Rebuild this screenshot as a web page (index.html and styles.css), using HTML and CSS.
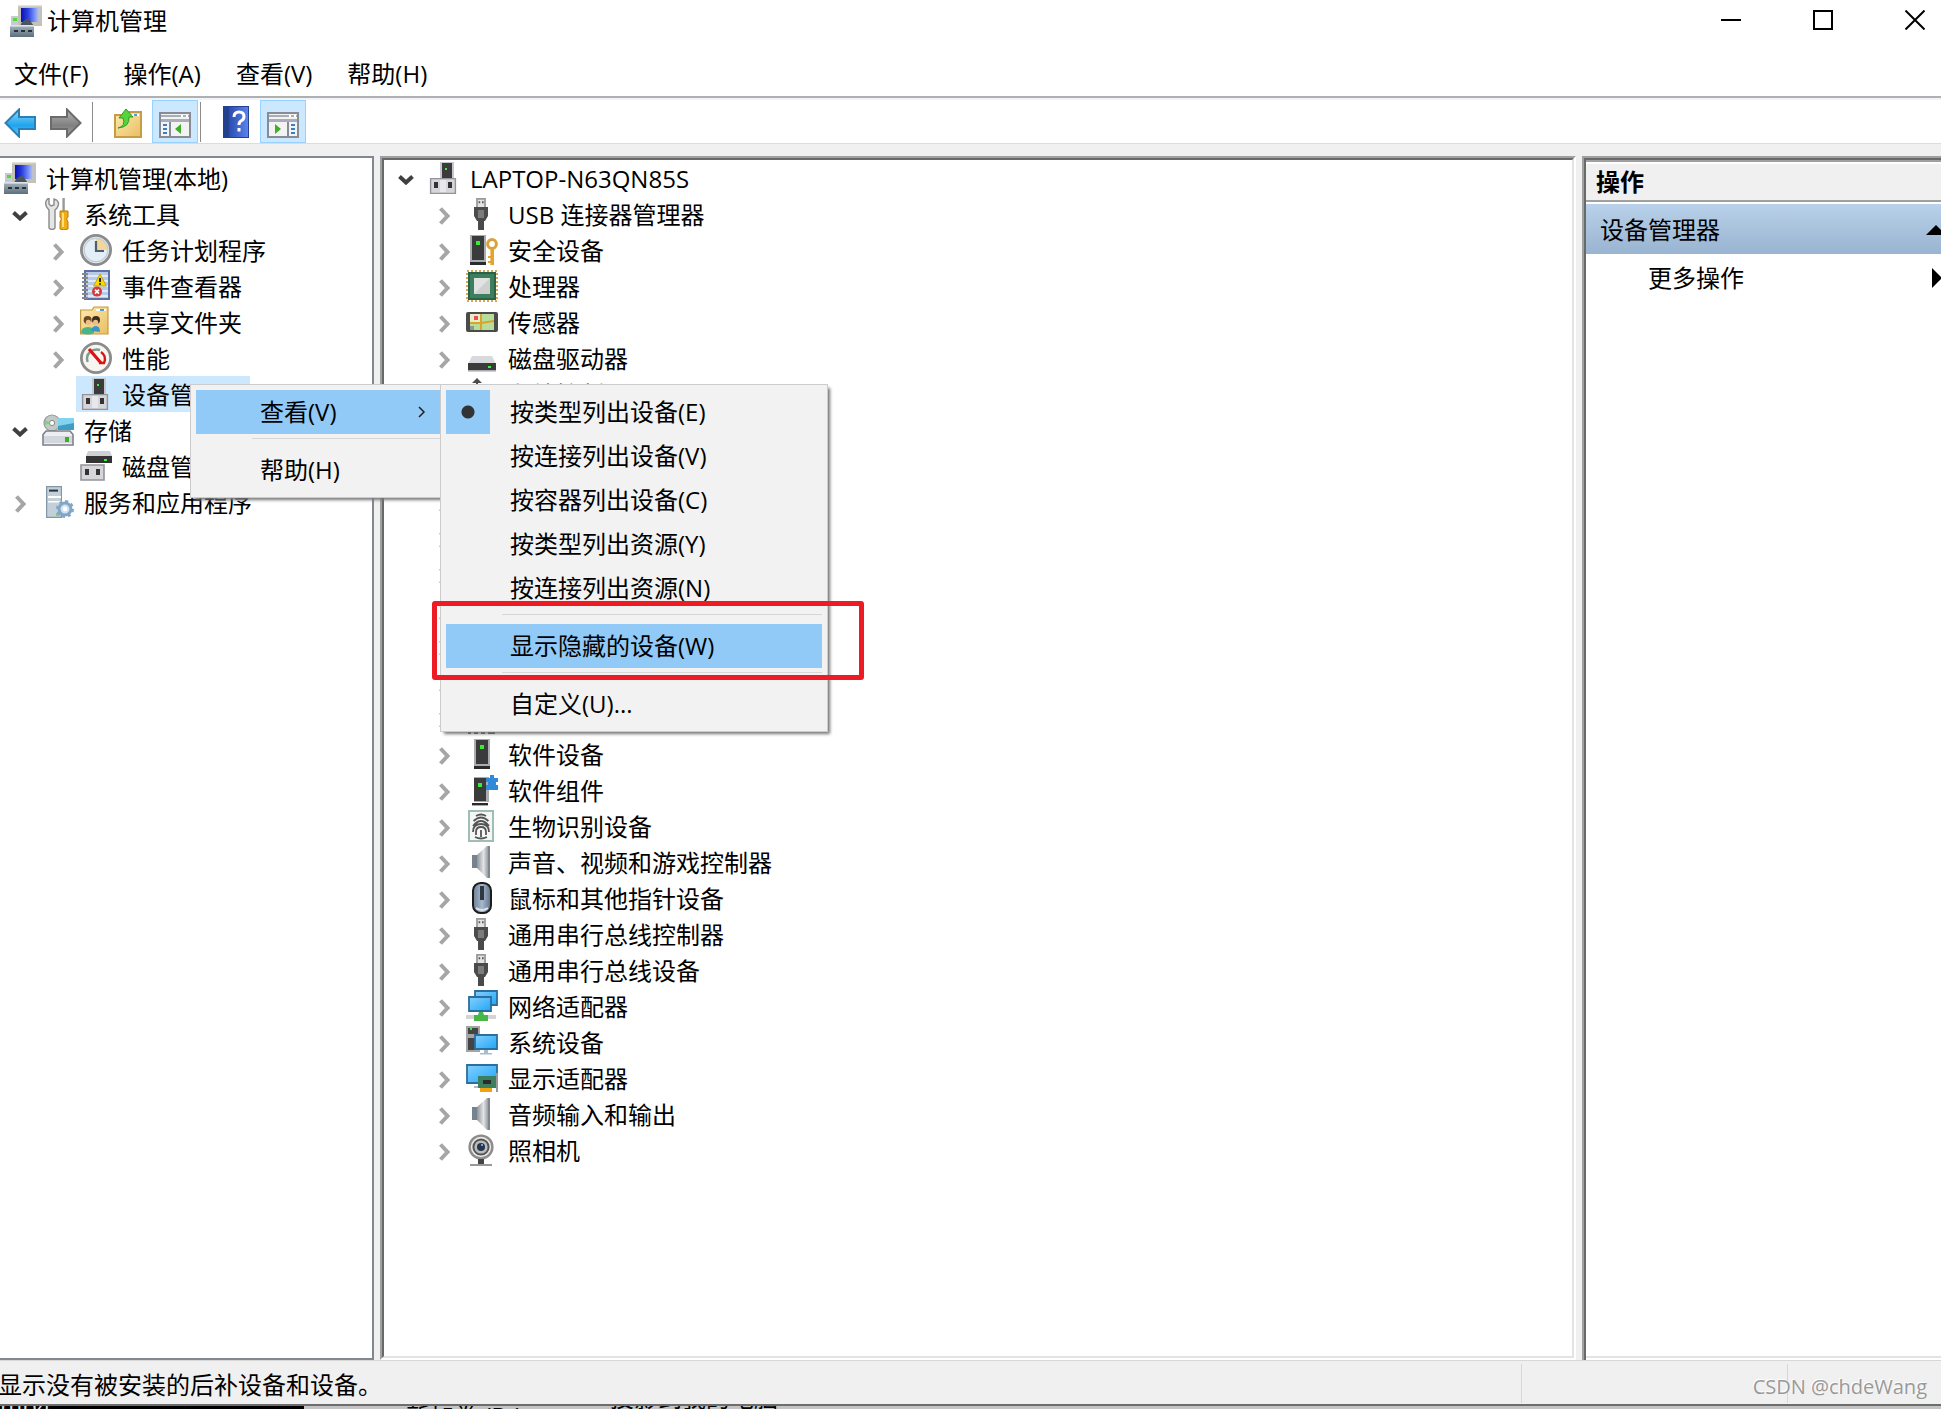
FILE: index.html
```html
<!DOCTYPE html>
<html lang="zh-CN">
<head>
<meta charset="utf-8">
<title>计算机管理</title>
<link rel="stylesheet" href="styles.css">
</head>
<body>
<svg class="sprite" aria-hidden="true">
  <defs>
    <linearGradient id="g-screen" x1="0" y1="0" x2="1" y2="0"><stop offset="0" stop-color="#0a10b4"/><stop offset=".4" stop-color="#2b3fe0"/><stop offset="1" stop-color="#a9c0ff"/></linearGradient>
    <linearGradient id="g-sky" x1="0" y1="0" x2="1" y2="1"><stop offset="0" stop-color="#85d0fc"/><stop offset="1" stop-color="#1fa6f9"/></linearGradient>
    <linearGradient id="g-folder" x1="0" y1="0" x2="1" y2="1"><stop offset="0" stop-color="#fdeab0"/><stop offset="1" stop-color="#e9bf62"/></linearGradient>
    <linearGradient id="g-metal" x1="0" y1="0" x2="1" y2="0"><stop offset="0" stop-color="#8f9499"/><stop offset=".5" stop-color="#e2e4e6"/><stop offset="1" stop-color="#7a8087"/></linearGradient>
    <linearGradient id="g-box" x1="0" y1="0" x2="0" y2="1"><stop offset="0" stop-color="#a8b6c0"/><stop offset="1" stop-color="#5c6f7c"/></linearGradient>
    <linearGradient id="g-help" x1="0" y1="0" x2="1" y2="0"><stop offset="0" stop-color="#2c4dae"/><stop offset="1" stop-color="#5b82ee"/></linearGradient>
    <linearGradient id="g-back" x1="0" y1="0" x2="0" y2="1"><stop offset="0" stop-color="#8fd8fb"/><stop offset=".6" stop-color="#1fa4ee"/><stop offset="1" stop-color="#6ccaf8"/></linearGradient>
    <linearGradient id="g-fwd" x1="0" y1="0" x2="0" y2="1"><stop offset="0" stop-color="#b5b5b5"/><stop offset=".6" stop-color="#808080"/><stop offset="1" stop-color="#a2a2a2"/></linearGradient>
    <linearGradient id="g-mouse" x1="0" y1="0" x2="1" y2="0"><stop offset="0" stop-color="#6b7f98"/><stop offset=".5" stop-color="#a9b8ca"/><stop offset="1" stop-color="#5c7089"/></linearGradient>
  </defs>
  <symbol id="chev-down" viewBox="0 0 16 10"><path d="M1.5 1.5 8 7.5l6.500-6" fill="none" stroke="#404040" stroke-width="4"/></symbol>
  <symbol id="chev-right" viewBox="0 0 11 18"><path d="M1.500 1.500 8.500 9l-7 7.500" fill="none" stroke="#a6a6a6" stroke-width="4"/></symbol>

  <symbol id="i-mgmt" viewBox="0 0 16 16">
    <path d="M.5 5.500h4v5h-4z" fill="#c4ccd0"/><path d="M1.500 6.500h2v1.500h-2z" fill="#4fdc3a"/>
    <path d="M4 0h12v10.500H4z" fill="#c4c2b6"/><path d="M4 0h12v.7H4z" fill="#e4e3dc"/><path d="M5.500 1.500h8.700v7H5.500z" fill="url(#g-screen)"/>
    <path d="M6 8.500l3-2 3 4H5z" fill="#4a5560"/>
    <path d="M0 10h12v6H0z" fill="url(#g-box)"/><path d="M2 12.500h2v1H2zM5.500 12.500h2v1h-2zM9 12.500h2v1H9z" fill="#26333c"/><path d="M0 10h12v.8H0z" fill="#dfe5e8"/>
  </symbol>
  <symbol id="i-tools" viewBox="0 0 16 16">
    <path d="M3.500 0v3l1 1 1.500-.5V.5C8 .8 9 2.800 7.500 5L6.500 6v9q-1.500 1.500-3 0V6L2.300 4.500C1.400 2.500 2 .8 3.500 0z" fill="#e5e5e5" stroke="#8a8a8a" stroke-width=".7"/>
    <path d="M10.200 0h1.200v7h-1.200z" fill="#999"/><path d="M9 6.500h4v3l-.7 1 .7 1.500v3.500q-2 1-4 0V12l.7-1.500-.7-1z" fill="#f1ad15" stroke="#b97b06" stroke-width=".5"/><path d="M10 7.500h1v7h-1z" fill="#ffe07d"/>
  </symbol>
  <symbol id="i-clock" viewBox="0 0 16 16">
    <circle cx="8" cy="8" r="7.300" fill="#e4eef6" stroke="#8b8b8b" stroke-width="1.400"/><path d="M8 8V2a6 6 0 0 1 6 6z" fill="#f1d79d"/><circle cx="8" cy="8" r="5.900" fill="none" stroke="#c5ced4" stroke-width=".7"/><path d="M8 3.500V8.500H12" fill="none" stroke="#4d5f70" stroke-width="1.100"/>
  </symbol>
  <symbol id="i-event" viewBox="0 0 16 16">
    <path d="M2.500.5h12v14h-12z" fill="#b8cbe6" stroke="#5d70a6"/><path d="M4 3h10M4 5.500h10M4 8h10M4 10.500h10M4 13h10" stroke="#eef4fc" stroke-width=".8"/>
    <path d="M1 2h3M1 4h3M1 6h3M1 8h3M1 10h3M1 12h3M1 14h3" stroke="#888" stroke-width=".9"/>
    <path d="M10 2l3.200 6H6.800z" fill="#f7d900" stroke="#b59a00" stroke-width=".4"/><path d="M9.500 4h1v2h-1zM9.500 6.600h1v.8h-1z" fill="#222"/>
    <circle cx="8.500" cy="10.800" r="2.500" fill="#d63a3a"/><path d="M7.500 9.800l2 2M9.500 9.800l-2 2" stroke="#fff" stroke-width=".8"/>
  </symbol>
  <symbol id="i-share" viewBox="0 0 16 16">
    <path d="M.3 2H6l1-1.500h7V14H.3z" fill="url(#g-folder)" stroke="#c69a45" stroke-width=".6"/><path d="M8 1.500h5v1H8z" fill="#fff"/><path d="M10 1.500h2v1h-2z" fill="#4a9be0"/>
    <circle cx="3.800" cy="7" r="2" fill="#6b4a22"/><circle cx="4.200" cy="8.200" r="1.300" fill="#edbd8a"/><circle cx="8" cy="7" r="2" fill="#3b2c1c"/><circle cx="7.800" cy="8.200" r="1.300" fill="#edbd8a"/>
    <path d="M.5 13.500q0-3 3.500-3t3 3q-3 1.500-6.500 0z" fill="#49b48a"/><path d="M5.500 12.500q.5-2.500 2.500-2.500t2 3z" fill="#3c93c9"/>
  </symbol>
  <symbol id="i-perf" viewBox="0 0 16 16">
    <circle cx="8" cy="8" r="7.300" fill="#f6f5f0" stroke="#8b8b8b" stroke-width="1.400"/><path d="M3.800 10C2.500 6 6 3 10 4" fill="none" stroke="#7f9a90" stroke-width="1.200"/><path d="M10.500 5q3 2 1.500 5.500H9.500" fill="none" stroke="#d01818" stroke-width="1.200"/><path d="M4.500 3.500l6 7" stroke="#e01010" stroke-width="1.600"/>
  </symbol>
  <symbol id="i-devmgr" viewBox="0 0 16 16">
    <path d="M6 0h7v8H6z" fill="#c4c8cd"/><path d="M7 .5h5v7.500H7z" fill="#3b3b3b"/><path d="M8.500 3h1v1h-1z" fill="#3cf03c"/>
    <path d="M1.300 8.300h12.400v7.400H1.300z" fill="#d6d6da" stroke="#93939a" stroke-width=".7"/><path d="M3 10h2v3H3zM10 10h2v3h-2z" fill="#333"/><path d="M6 9h3v6H6z" fill="#e8e8ec"/>
  </symbol>
  <symbol id="i-storage" viewBox="0 0 16 16">
    <circle cx="5" cy="4.500" r="4" fill="#c2c9c6" stroke="#999" stroke-width=".6"/><circle cx="5" cy="4.500" r="1.300" fill="#fff" stroke="#888" stroke-width=".5"/><path d="M1.500 3l3 1.500-3 1z" fill="#76d67c"/>
    <path d="M8 2h8v6H8z" fill="#3d9dc4"/><path d="M8 2h8v2.500L8 6z" fill="#83d3ee"/>
    <path d="M2 8.500h12l1.500 1.800v5.200H.5v-5.200z" fill="#eceef2" stroke="#7e7f88" stroke-width=".8"/><path d="M1 11h14v3.500H1z" fill="#d4d6de"/><path d="M11.500 11.500h2v2.500h-2z" fill="#3fae22"/>
  </symbol>
  <symbol id="i-diskmgmt" viewBox="0 0 16 16">
    <path d="M4 .500h11l1 2.500H3z" fill="#cdd0d4"/><path d="M3 3h13v3.500H3z" fill="#333"/><path d="M12 4.500h1.500v1H12z" fill="#3cf03c"/>
    <path d="M.5 7.500h11.500V15H.5z" fill="#d6d6da" stroke="#93939a" stroke-width=".8"/><path d="M2.500 9.500h2v3h-2zM8 9.500h2v3H8z" fill="#333"/>
  </symbol>
  <symbol id="i-services" viewBox="0 0 16 16">
    <path d="M2.300.3h7.400v15.400H2.300z" fill="#c3d0da" stroke="#8396a5" stroke-width=".6"/><path d="M3.500 1.800H8v1H3.500z" fill="#26333c"/><path d="M3 5h6.500v1H3zM3 7.500h6.500v.8H3z" fill="#fff"/><path d="M7 13.500h2v1.500H7z" fill="#70e04c"/>
    <circle cx="11.500" cy="11.500" r="3" fill="#cfe2f2" stroke="#82a6c6" stroke-width="1.500"/><circle cx="11.500" cy="11.500" r="3.900" fill="none" stroke="#82a6c6" stroke-width="1.200" stroke-dasharray="1.500 1.560"/><circle cx="11.500" cy="11.500" r="1.200" fill="#fff"/>
  </symbol>
  <symbol id="i-usb" viewBox="0 0 16 16">
    <path d="M5.500.4h4V5h-4z" fill="#e3e3e3" stroke="#9a9a9a" stroke-width=".9"/><path d="M6.300 1.600h.8v1h-.8zM8 1.600h.8v1H8z" fill="#555"/><path d="M4 4.500h7V9l-1.500 2.500h-4L4 9z" fill="#4b4b4b"/><path d="M6 6h3v4H6z" fill="#7c7c7c"/><path d="M6 11h3v5H6z" fill="#4a4a4a"/>
  </symbol>
  <symbol id="i-controller" viewBox="0 0 16 16">
    <path d="M5.500 0l2.500 2.500h-2V7H5V2.500H3z" fill="#4b4b4b"/><path d="M1 8h14v5H1z" fill="#3b3b3b"/>
  </symbol>
  <symbol id="i-hid" viewBox="0 0 16 16">
    <path d="M1 6h13v5H1z" fill="#b9bec4"/><path d="M1 15h1.500v1H1zM4 15h2v1H4zM7.500 15h2v1h-2zM11 14.500h3.500V16H11z" fill="#3b3b3b"/>
  </symbol>
  <symbol id="i-tower" viewBox="0 0 16 16">
    <path d="M4 .5h8v13.500H4z" fill="#a9adb2"/><path d="M5 1h6v12H5z" fill="#3b3b3b"/><path d="M7 3.500h2v2H7z" fill="#33ee33"/><path d="M4 14h8v1.500H4z" fill="#2b2b2b"/>
  </symbol>
  <symbol id="i-security" viewBox="0 0 16 16">
    <path d="M2 .5h8v13.500H2z" fill="#a9adb2"/><path d="M3 1h6v12H3z" fill="#3b3b3b"/><path d="M5 3.500h2v2H5z" fill="#33ee33"/><path d="M2 14h8v1.500H2z" fill="#2b2b2b"/>
    <circle cx="13" cy="5" r="2.200" fill="none" stroke="#d9a23a" stroke-width="1.500"/><path d="M12.200 7.500h1.800v8h-1.800zM11 11h1.500v1H11zM11 13.500h1.500v1H11z" fill="#e5a52c"/>
  </symbol>
  <symbol id="i-cpu" viewBox="0 0 16 16">
    <rect x=".5" y=".5" width="15" height="15" fill="none" stroke="#d9a657" stroke-dasharray="1 1"/><path d="M1 1h14v14H1z" fill="#2c6148"/><path d="M2 2h12v12H2z" fill="#3b7f5f"/><path d="M4 4h8v8H4z" fill="#e2e2e2"/><path d="M12 4v8H4z" fill="#cfcfcf"/>
  </symbol>
  <symbol id="i-sensor" viewBox="0 0 16 16">
    <rect y="3" width="16" height="10" rx="1" fill="#4b4b4b"/><path d="M2 4h12v8H2z" fill="#b9dc9a"/><path d="M2 4h5v4H2z" fill="#e7edc4"/><path d="M7.500 4v8M2 8.500h5.500L14 7.500" fill="none" stroke="#d6a52c"/><path d="M4 5h2v2H4z" fill="#ee4a5a"/><path d="M2 10h2v2H2z" fill="#8a9a8a"/>
  </symbol>
  <symbol id="i-disk" viewBox="0 0 16 16">
    <path d="M3 7h10l1.700 3.500H1.300z" fill="#d7d9dc"/><path d="M1 10.500h14v3.500H1z" fill="#3b3b3b"/><path d="M1 14h14v.8H1z" fill="#a9adb2"/><path d="M11 12h1.500v1H11z" fill="#3cf03c"/>
  </symbol>
  <symbol id="i-component" viewBox="0 0 16 16">
    <path d="M4 1.500h7.500v12.500H4z" fill="#a9adb2"/><path d="M4 2h6v11.500H4z" fill="#3b3b3b"/><path d="M6 4.500h2v2H6z" fill="#33ee33"/><path d="M3 14.500h8v1.200H3z" fill="#2b2b2b"/>
    <path d="M10 2h2V.5h2V2h2v2h-1v1.500h1V8h-6V5.500h1V4h-1z" fill="#2f8bd8"/>
  </symbol>
  <symbol id="i-finger" viewBox="0 0 16 16">
    <path d="M1.500.5h12v15h-12z" fill="#f4f7f6" stroke="#9dbfb5"/><path d="M5 3q2.500-1.500 5 0M3.800 5.500q3.700-3.500 7.400 0M3.500 8q4-5 8 0M3.500 11Q3.500 7 7.500 7t4 4M5 12.500V11q0-2.500 2.500-2.500T10 11v1.500M7.500 10v3.500M4.500 13.500q3 1.500 6 0" fill="none" stroke="#555" stroke-width=".9"/>
  </symbol>
  <symbol id="i-speaker" viewBox="0 0 16 16">
    <path d="M3 4.500h2.500v6.500H3z" fill="#76828e"/><path d="M5.500 4.500L10.500 0H12v16h-1.500L5.500 11z" fill="url(#g-metal)"/><path d="M11 0h1v16h-1z" fill="#7f868d"/>
  </symbol>
  <symbol id="i-mouse" viewBox="0 0 16 16">
    <rect x="3.500" y=".5" width="9" height="15" rx="3.800" fill="url(#g-mouse)" stroke="#1c1c1c"/><rect x="7" y="2" width="2" height="7" fill="#2f3740"/><path d="M5 13q3 2 6 0" stroke="#dbe3ec" fill="none"/>
  </symbol>
  <symbol id="i-net" viewBox="0 0 16 16">
    <path d="M4.500.5h11v7h-11z" fill="url(#g-sky)" stroke="#2a6f9e" stroke-width=".9"/><path d="M1.500 3.500h11v7h-11z" fill="url(#g-sky)" stroke="#2a6f9e" stroke-width=".9"/>
    <path d="M0 12.500h15v2H0z" fill="#d4d4d4"/><path d="M4 12.500h2l.5-1.500h2l.5 1.500h2v3H4z" fill="#45b849"/>
  </symbol>
  <symbol id="i-system" viewBox="0 0 16 16">
    <path d="M0 0h7v13H0z" fill="#a5a5a5"/><path d="M1 1h5v3H1zM1 6h5v6H1z" fill="#444"/><path d="M2 1h1v1H2z" fill="#3cf03c"/><path d="M4.500 4.500h11v7h-11z" fill="url(#g-sky)" stroke="#2a6f9e" stroke-width=".9"/><path d="M9 12h2v1.500h2v.8H7v-.8h2z" fill="#a9bccb"/>
  </symbol>
  <symbol id="i-display" viewBox="0 0 16 16">
    <path d="M.5 1.500h15v9H.5z" fill="url(#g-sky)" stroke="#2a6f9e" stroke-width=".9"/><path d="M4 12h3v1H4z" fill="#a9bccb"/><path d="M6 7h9v6H6z" fill="#3b7f5f"/><path d="M8.500 9h4v2h-4z" fill="#2b2b2b"/><path d="M15 5.500h1V15h-1z" fill="#999"/><path d="M7 13h6v2H7z" fill="#f1a30f"/>
  </symbol>
  <symbol id="i-camera" viewBox="0 0 16 16">
    <circle cx="7.500" cy="6.500" r="5.700" fill="#e8e8e8" stroke="#8c8c8c" stroke-width="1.200"/><circle cx="7.500" cy="6.500" r="3.800" fill="#bbb" stroke="#555" stroke-width="1"/><circle cx="7.500" cy="6.500" r="2" fill="#24364d"/><path d="M7.500 5h1v1h-1z" fill="#6aa4e0"/><path d="M6 12.500h3V15H6z" fill="#444"/><path d="M2 15h11v1H2z" fill="#999"/>
  </symbol>

  <symbol id="t-back" viewBox="0 0 32 30"><path d="M1.500 15L15 1.500V9h16v12H15v7.500z" fill="url(#g-back)" stroke="#2b7fb5" stroke-width="2"/></symbol>
  <symbol id="t-fwd" viewBox="0 0 32 30"><path d="M30.500 15L17 1.500V9H1v12h16v7.500z" fill="url(#g-fwd)" stroke="#6b6b6b" stroke-width="2"/></symbol>
  <symbol id="t-up" viewBox="0 0 28 30"><path d="M1 7h8l3-3h15v25H1z" fill="url(#g-folder)" stroke="#c79c47" stroke-width="2"/><path d="M18 6h7v2h-7z" fill="#fff"/><path d="M20 6h3v2h-3z" fill="#4a9be0"/><path d="M4 20q8-2 5-10H5l7-9 7 8h-4q1 10-11 11z" fill="#55d43c" stroke="#2f9e22"/></symbol>
  <symbol id="t-left" viewBox="0 0 32 26"><path d="M1 1h30v24H1z" fill="#f3f3f3" stroke="#868c96" stroke-width="2"/><path d="M2 3h28v2H2zM2 7h28v3H2z" fill="#a9adb8"/><path d="M22 3h2v2h-2zM27 3h2v2h-2z" fill="#fff"/><path d="M10 10h2v15h-2z" fill="#868c96"/><path d="M4 12h4v2H4zM4 16h4v2H4zM4 20h4v2H4z" fill="#3a7fc4"/><path d="M22 12v10l-6-5z" fill="#3eae28"/></symbol>
  <symbol id="t-right" viewBox="0 0 32 26"><path d="M1 1h30v24H1z" fill="#f3f3f3" stroke="#868c96" stroke-width="2"/><path d="M2 3h28v2H2zM2 7h28v3H2z" fill="#a9adb8"/><path d="M22 3h2v2h-2zM27 3h2v2h-2z" fill="#fff"/><path d="M20 10h2v15h-2z" fill="#868c96"/><path d="M24 12h4v2h-4zM24 16h4v2h-4zM24 20h4v2h-4z" fill="#3a7fc4"/><path d="M8 12v10l6-5z" fill="#3eae28"/></symbol>
  <symbol id="t-help" viewBox="0 0 26 32"><path d="M0 0h26v32H0z" fill="#24418f"/><path d="M6 1h19v30H6z" fill="url(#g-help)"/><path d="M11 11q0-5 5-5t5 4.500q0 3-3 4.500-2 1-2 4" fill="none" stroke="#fff" stroke-width="3"/><path d="M14.500 22h3v3.500h-3z" fill="#fff"/></symbol>
</svg>

<div class="app">
  <header class="titlebar">
    <svg class="icon"><use href="#i-mgmt"/></svg>
    <h1 class="title">计算机管理</h1>
    <div class="caption">
      <button class="caption-btn" aria-label="最小化"><svg width="20" height="20"><path d="M0 10h20" stroke="#000" stroke-width="2"/></svg></button>
      <button class="caption-btn" aria-label="最大化"><svg width="20" height="20"><path d="M1 1h18v18H1z" fill="none" stroke="#000" stroke-width="2"/></svg></button>
      <button class="caption-btn" aria-label="关闭"><svg width="20" height="20"><path d="M.5.5l19 19M19.500.5l-19 19" stroke="#000" stroke-width="2"/></svg></button>
    </div>
  </header>

  <nav class="menubar">
    <button>文件(F)</button>
    <button>操作(A)</button>
    <button>查看(V)</button>
    <button>帮助(H)</button>
  </nav>

  <div class="toolbar">
    <button class="tool" aria-label="后退"><svg width="32" height="30"><use href="#t-back"/></svg></button>
    <button class="tool tool-forward" aria-label="前进"><svg width="32" height="30"><use href="#t-fwd"/></svg></button>
    <span class="tool-sep"></span>
    <button class="tool tool-wide" aria-label="向上"><svg width="28" height="30"><use href="#t-up"/></svg></button>
    <button class="tool active" aria-label="显示控制台树"><svg width="32" height="26"><use href="#t-left"/></svg></button>
    <span class="tool-sep"></span>
    <button class="tool tool-wide" aria-label="帮助"><svg width="26" height="32"><use href="#t-help"/></svg></button>
    <button class="tool active" aria-label="显示操作窗格"><svg width="32" height="26"><use href="#t-right"/></svg></button>
  </div>

  <main class="panes">
    <section class="pane pane-nav">
      <ul class="tree">
        <li class="row l0"><span class="label"><svg class="icon"><use href="#i-mgmt"/></svg>计算机管理(本地)</span></li>
        <li class="row l1"><svg class="chev down"><use href="#chev-down"/></svg><span class="label"><svg class="icon"><use href="#i-tools"/></svg>系统工具</span></li>
        <li class="row l2"><svg class="chev"><use href="#chev-right"/></svg><span class="label"><svg class="icon"><use href="#i-clock"/></svg>任务计划程序</span></li>
        <li class="row l2"><svg class="chev"><use href="#chev-right"/></svg><span class="label"><svg class="icon"><use href="#i-event"/></svg>事件查看器</span></li>
        <li class="row l2"><svg class="chev"><use href="#chev-right"/></svg><span class="label"><svg class="icon"><use href="#i-share"/></svg>共享文件夹</span></li>
        <li class="row l2"><svg class="chev"><use href="#chev-right"/></svg><span class="label"><svg class="icon"><use href="#i-perf"/></svg>性能</span></li>
        <li class="row l2"><svg class="chev"></svg><span class="label selected"><svg class="icon"><use href="#i-devmgr"/></svg>设备管理器</span></li>
        <li class="row l1"><svg class="chev down"><use href="#chev-down"/></svg><span class="label"><svg class="icon"><use href="#i-storage"/></svg>存储</span></li>
        <li class="row l2"><svg class="chev"></svg><span class="label"><svg class="icon"><use href="#i-diskmgmt"/></svg>磁盘管理</span></li>
        <li class="row l1"><svg class="chev"><use href="#chev-right"/></svg><span class="label"><svg class="icon"><use href="#i-services"/></svg>服务和应用程序</span></li>
      </ul>
    </section>

    <section class="pane pane-main">
      <ul class="tree">
        <li class="row l1"><svg class="chev down"><use href="#chev-down"/></svg><span class="label"><svg class="icon"><use href="#i-devmgr"/></svg>LAPTOP-N63QN85S</span></li>
        <li class="row l2"><svg class="chev"><use href="#chev-right"/></svg><span class="label"><svg class="icon"><use href="#i-usb"/></svg>USB 连接器管理器</span></li>
        <li class="row l2"><svg class="chev"><use href="#chev-right"/></svg><span class="label"><svg class="icon"><use href="#i-security"/></svg>安全设备</span></li>
        <li class="row l2"><svg class="chev"><use href="#chev-right"/></svg><span class="label"><svg class="icon"><use href="#i-cpu"/></svg>处理器</span></li>
        <li class="row l2"><svg class="chev"><use href="#chev-right"/></svg><span class="label"><svg class="icon"><use href="#i-sensor"/></svg>传感器</span></li>
        <li class="row l2"><svg class="chev"><use href="#chev-right"/></svg><span class="label"><svg class="icon"><use href="#i-disk"/></svg>磁盘驱动器</span></li>
        <li class="row l2"><svg class="chev"><use href="#chev-right"/></svg><span class="label"><svg class="icon"><use href="#i-controller"/></svg>存储控制器</span></li>
        <li class="row l2"><svg class="chev"><use href="#chev-right"/></svg></li>
        <li class="row l2"><svg class="chev"><use href="#chev-right"/></svg></li>
        <li class="row l2"><svg class="chev"><use href="#chev-right"/></svg></li>
        <li class="row l2"><svg class="chev"><use href="#chev-right"/></svg></li>
        <li class="row l2"><svg class="chev"><use href="#chev-right"/></svg></li>
        <li class="row l2"><svg class="chev"><use href="#chev-right"/></svg></li>
        <li class="row l2"><svg class="chev"><use href="#chev-right"/></svg></li>
        <li class="row l2"><svg class="chev"><use href="#chev-right"/></svg></li>
        <li class="row l2"><svg class="chev"><use href="#chev-right"/></svg><span class="label"><svg class="icon"><use href="#i-hid"/></svg></span></li>
        <li class="row l2"><svg class="chev"><use href="#chev-right"/></svg><span class="label"><svg class="icon"><use href="#i-tower"/></svg>软件设备</span></li>
        <li class="row l2"><svg class="chev"><use href="#chev-right"/></svg><span class="label"><svg class="icon"><use href="#i-component"/></svg>软件组件</span></li>
        <li class="row l2"><svg class="chev"><use href="#chev-right"/></svg><span class="label"><svg class="icon"><use href="#i-finger"/></svg>生物识别设备</span></li>
        <li class="row l2"><svg class="chev"><use href="#chev-right"/></svg><span class="label"><svg class="icon"><use href="#i-speaker"/></svg>声音、视频和游戏控制器</span></li>
        <li class="row l2"><svg class="chev"><use href="#chev-right"/></svg><span class="label"><svg class="icon"><use href="#i-mouse"/></svg>鼠标和其他指针设备</span></li>
        <li class="row l2"><svg class="chev"><use href="#chev-right"/></svg><span class="label"><svg class="icon"><use href="#i-usb"/></svg>通用串行总线控制器</span></li>
        <li class="row l2"><svg class="chev"><use href="#chev-right"/></svg><span class="label"><svg class="icon"><use href="#i-usb"/></svg>通用串行总线设备</span></li>
        <li class="row l2"><svg class="chev"><use href="#chev-right"/></svg><span class="label"><svg class="icon"><use href="#i-net"/></svg>网络适配器</span></li>
        <li class="row l2"><svg class="chev"><use href="#chev-right"/></svg><span class="label"><svg class="icon"><use href="#i-system"/></svg>系统设备</span></li>
        <li class="row l2"><svg class="chev"><use href="#chev-right"/></svg><span class="label"><svg class="icon"><use href="#i-display"/></svg>显示适配器</span></li>
        <li class="row l2"><svg class="chev"><use href="#chev-right"/></svg><span class="label"><svg class="icon"><use href="#i-speaker"/></svg>音频输入和输出</span></li>
        <li class="row l2"><svg class="chev"><use href="#chev-right"/></svg><span class="label"><svg class="icon"><use href="#i-camera"/></svg>照相机</span></li>
      </ul>
    </section>

    <aside class="pane pane-actions">
      <h2 class="actions-title">操作</h2>
      <button class="actions-group">设备管理器<svg width="20" height="10"><path d="M10 0l10 10H0z"/></svg></button>
      <button class="actions-item">更多操作<svg width="10" height="20"><path d="M0 0l10 10L0 20z"/></svg></button>
    </aside>
  </main>

  <footer class="statusbar">
    <span class="status-text">显示没有被安装的后补设备和设备。</span>
    <span class="status-cell"></span>
    <span class="status-cell status-end"></span>
  </footer>
  <div class="behind">
    <span class="behind-dark">mp4</span>
    <span class="behind-drive">新加卷 (D:)</span>
    <span class="behind-link">投影到我的电脑</span>
  </div>

  <div class="menu menu-context" role="menu">
    <button class="menu-item hot" role="menuitem">查看(V)<svg class="menu-arrow" width="8" height="12"><path d="M1 1l5 5-5 5" fill="none" stroke="#222" stroke-width="1.500"/></svg></button>
    <hr class="menu-sep">
    <button class="menu-item" role="menuitem">帮助(H)</button>
  </div>
  <div class="menu menu-view" role="menu">
    <button class="menu-item checked" role="menuitemradio" aria-checked="true">按类型列出设备(E)</button>
    <button class="menu-item" role="menuitem">按连接列出设备(V)</button>
    <button class="menu-item" role="menuitem">按容器列出设备(C)</button>
    <button class="menu-item" role="menuitem">按类型列出资源(Y)</button>
    <button class="menu-item" role="menuitem">按连接列出资源(N)</button>
    <hr class="menu-sep">
    <button class="menu-item hot" role="menuitem">显示隐藏的设备(W)</button>
    <hr class="menu-sep">
    <button class="menu-item" role="menuitem">自定义(U)...</button>
  </div>
  <div class="mark"></div>
  <div class="watermark">CSDN @chdeWang</div>
</div>
</body>
</html>
```
FILE: styles.css
```css
* { box-sizing: border-box; }

body {
  margin: 0;
  background: #fff;
  color: #000;
  font: 24px/36px "Open Sans", "Noto Sans CJK SC", sans-serif;
}

button {
  margin: 0;
  padding: 0;
  border: 0;
  background: none;
  color: inherit;
  font: inherit;
  text-align: left;
}

svg { display: block; flex: none; }
.sprite { position: absolute; width: 0; height: 0; }
.icon { width: 32px; height: 32px; }

.app {
  position: relative;
  display: flex;
  flex-direction: column;
  height: 100vh;
  overflow: hidden;
}

/* Title bar */
.titlebar {
  display: flex;
  align-items: center;
  flex: none;
  height: 42px;
  padding-left: 10px;
}
.title { margin: 0 0 0 5px; font-size: 24px; font-weight: 400; }
.caption { display: flex; align-self: flex-start; margin: 0 -20px 0 auto; }
.caption-btn {
  display: flex;
  align-items: center;
  justify-content: center;
  width: 92px;
  height: 40px;
}

/* Menu bar */
.menubar {
  display: flex;
  align-items: center;
  flex: none;
  gap: 35px;
  height: 56px;
  padding: 10px 14px 0;
  border-bottom: 2px solid #b0b0b0;
}

/* Toolbar */
.toolbar {
  display: flex;
  flex: none;
  height: 46px;
  border-top: 2px solid #f1f5fb;
  border-bottom: 1px solid #dcdcdc;
}
.tool {
  display: flex;
  align-items: flex-end;
  justify-content: center;
  width: 46px;
  padding-bottom: 5px;
}
.tool:first-child { width: 40px; }
.tool-forward { width: 52px; }
.tool-wide { width: 48px; }
.tool.active { border: 1px solid #99d1ff; background: #cce8ff; padding-bottom: 4px; }
.tool-sep { width: 1px; margin: 2px 11px 1px 0; background: #8c8c8c; }
.active + .tool-sep { margin-left: 2px; }

/* Panes */
.panes {
  display: flex;
  flex: 1;
  gap: 6px;
  min-height: 0;
  padding-top: 12px;
  background: #f0f0f0;
}
.pane { background: #fff; overflow: hidden; }
.pane-nav {
  flex: 0 0 374px;
  padding-top: 2px;
  border: solid #828790;
  border-width: 2px 2px 2px 0;
}
.pane-main {
  flex: 1;
  border: solid;
  border-width: 2px;
  border-color: #a0a0a0 #fff #fff #a0a0a0;
}
.pane-main .tree {
  height: 100%;
  padding-left: 2px;
  border: solid;
  border-width: 2px;
  border-color: #696969 #e3e3e3 #e3e3e3 #696969;
}
.pane-actions {
  flex: 0 0 359px;
  border: solid #a0a0a0;
  border-width: 2px 0 0 2px;
  box-shadow: inset 2px 2px #696969, inset 0 -2px #fff, inset 0 -4px #e3e3e3;
  padding: 2px 0 4px 2px;
}

/* Trees */
.tree { margin: 0; padding: 0; list-style: none; }
.row { display: flex; align-items: center; height: 36px; white-space: nowrap; }
.row.l2 { padding-left: 38px; }
.chev { width: 38px; height: 18px; margin-top: 3px; padding: 0 0 0 3px; }
.chev.down { height: 10px; padding: 0 0 0 2px; }
.label {
  display: flex;
  align-items: center;
  gap: 10px;
  height: 36px;
  padding: 2px 8px 0 4px;
}
.label .icon { margin-top: -2px; }
.label.selected { background: #cce8ff; }

/* Actions pane */
.actions-title {
  margin: 0;
  padding-left: 10px;
  border: solid #a0a0a0;
  border-width: 2px 0;
  background: #f0f0f0;
  box-shadow: inset 0 2px #fff;
  font-size: 24px;
  font-weight: 700;
  line-height: 40px;
  height: 42px;
}
.actions-group,
.actions-item {
  display: flex;
  align-items: center;
  justify-content: space-between;
  width: 100%;
}
.actions-group {
  height: 50px;
  margin-top: 2px;
  padding: 2px 0 0 14px;
  background: linear-gradient(#b9d1ea, #99b4d1);
}
.actions-group svg { margin-right: -5px; }
.actions-item { height: 48px; padding-left: 62px; }
.actions-item svg { margin-right: -1px; }

/* Status bar */
.statusbar {
  display: flex;
  flex: none;
  height: 44px;
  padding-bottom: 1px;
  border-top: 1px solid #d7d7d7;
  background: #f0f0f0;
}
.status-text { flex: 1; margin-left: -2px; line-height: 48px; height: 42px; }
.status-cell { width: 266px; margin-top: 3px; border-left: 1px solid #d7d7d7; }
.status-end { width: 154px; }

/* Sliver of the windows lying behind */
.behind {
  display: flex;
  flex: none;
  height: 5px;
  overflow: hidden;
  border-top: 2px solid #6d6d6d;
  background: #c4c4c4;
}
.behind-dark { width: 304px; height: 5px; background: #000; color: #ddd; line-height: 0; }
.behind-drive { width: 242px; padding-left: 102px; white-space: nowrap; line-height: 20px; }
.behind-link { flex: 1; padding-left: 64px; line-height: 0; margin-top: -8px; }

/* Popup menus */
.menu {
  position: absolute;
  top: 384px;
  padding: 5px;
  border: 1px solid #ccc;
  background: #f2f2f2;
  box-shadow: 3px 3px 3px -1px #777;
}
.menu-context { left: 190px; width: 256px; }
.menu-view { left: 440px; width: 388px; }
.menu-item {
  display: flex;
  align-items: center;
  justify-content: space-between;
  width: 100%;
  height: 44px;
  padding: 0 14px 0 64px;
}
.menu-item.hot { background: #91c9f7; }
.menu-item.checked { padding-left: 0; justify-content: flex-start; gap: 20px; }
.menu-item.checked::before {
  content: "";
  width: 44px;
  height: 44px;
  background: radial-gradient(circle, #333 6px, #91c9f7 7px);
}
.menu-sep {
  height: 1px;
  margin: 4px 0 9px 56px;
  border: 0;
  background: #d7d7d7;
}

/* Red annotation frame and watermark */
.mark {
  position: absolute;
  left: 432px;
  top: 601px;
  width: 432px;
  height: 79px;
  border: 5px solid #ed1c24;
  border-radius: 3px;
}
.watermark {
  position: absolute;
  right: 14px;
  bottom: 8px;
  color: #999;
  font-size: 20px;
  line-height: 28px;
  text-shadow: -1px -1px #fff;
}
```
